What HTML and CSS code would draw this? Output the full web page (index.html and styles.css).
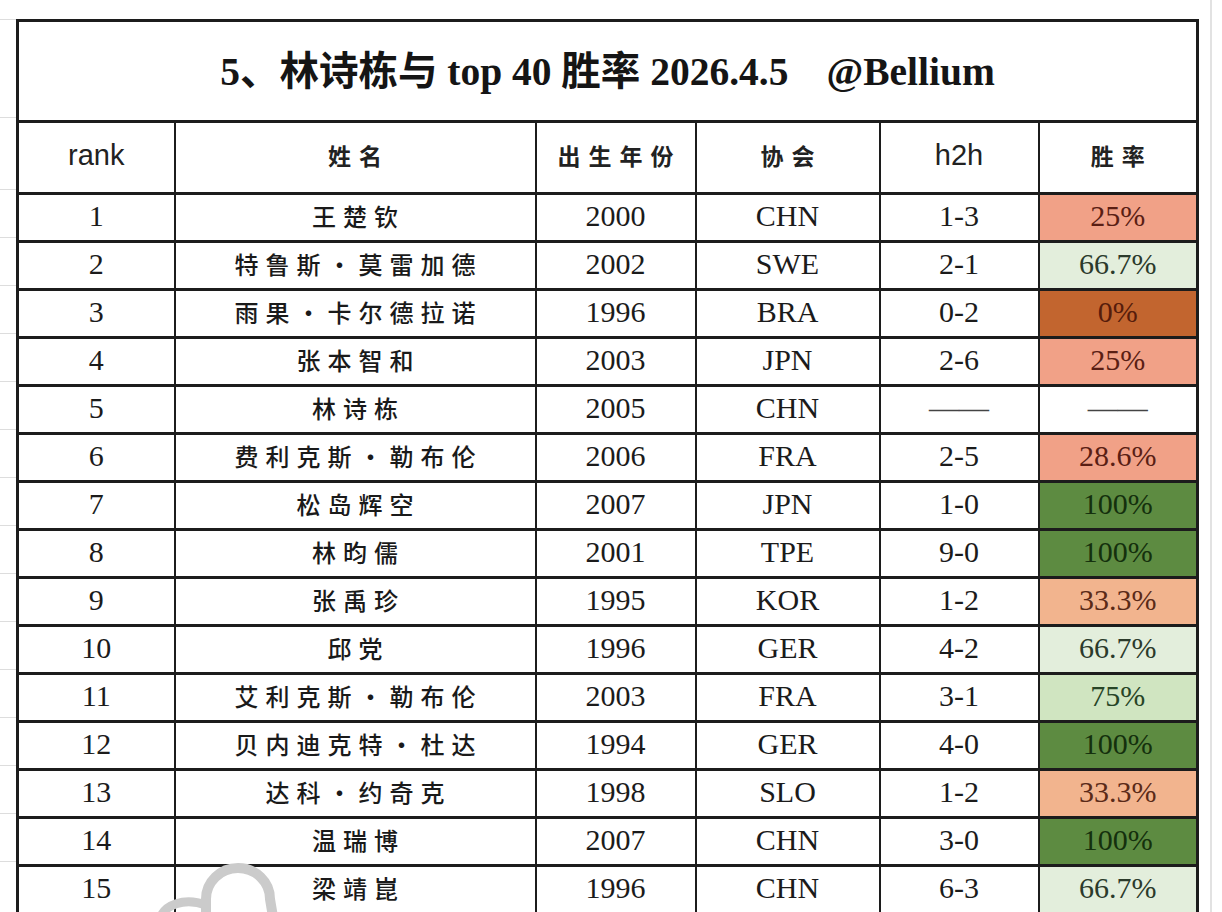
FILE: index.html
```html
<!DOCTYPE html>
<html lang="zh-CN">
<head>
<meta charset="utf-8">
<title>林诗栋与 top 40 胜率</title>
<link rel="stylesheet" href="styles.css">
</head>
<body>
<div class="page">
  <div class="gutter">
    <div class="g-title"></div>
    <div class="g-head"></div>
    <div class="g-row"></div><div class="g-row"></div><div class="g-row"></div>
    <div class="g-row"></div><div class="g-row"></div><div class="g-row"></div>
    <div class="g-row"></div><div class="g-row"></div><div class="g-row"></div>
    <div class="g-row"></div><div class="g-row"></div><div class="g-row"></div>
    <div class="g-row"></div><div class="g-row"></div><div class="g-row"></div>
  </div>
  <table class="sheet">
    <colgroup>
      <col class="c-rank"><col class="c-name"><col class="c-year"><col class="c-assoc"><col class="c-h2h"><col class="c-rate">
    </colgroup>
    <tr class="title-row"><td colspan="6">5、林诗栋与 top 40 胜率 2026.4.5<span class="handle">@Bellium</span></td></tr>
    <tr class="head-row">
      <th class="en">rank</th><th class="zh">姓名</th><th class="zh">出生年份</th><th class="zh">协会</th><th class="en">h2h</th><th class="zh">胜率</th>
    </tr>
    <tr><td>1</td><td class="name">王楚钦</td><td>2000</td><td>CHN</td><td>1-3</td><td class="rate r25">25%</td></tr>
    <tr><td>2</td><td class="name">特鲁斯·莫雷加德</td><td>2002</td><td>SWE</td><td>2-1</td><td class="rate r67">66.7%</td></tr>
    <tr><td>3</td><td class="name">雨果·卡尔德拉诺</td><td>1996</td><td>BRA</td><td>0-2</td><td class="rate r0">0%</td></tr>
    <tr><td>4</td><td class="name">张本智和</td><td>2003</td><td>JPN</td><td>2-6</td><td class="rate r25">25%</td></tr>
    <tr><td>5</td><td class="name">林诗栋</td><td>2005</td><td>CHN</td><td class="dash">——</td><td class="rate dash">——</td></tr>
    <tr><td>6</td><td class="name">费利克斯·勒布伦</td><td>2006</td><td>FRA</td><td>2-5</td><td class="rate r25">28.6%</td></tr>
    <tr><td>7</td><td class="name">松岛辉空</td><td>2007</td><td>JPN</td><td>1-0</td><td class="rate r100">100%</td></tr>
    <tr><td>8</td><td class="name">林昀儒</td><td>2001</td><td>TPE</td><td>9-0</td><td class="rate r100">100%</td></tr>
    <tr><td>9</td><td class="name">张禹珍</td><td>1995</td><td>KOR</td><td>1-2</td><td class="rate r33">33.3%</td></tr>
    <tr><td>10</td><td class="name">邱党</td><td>1996</td><td>GER</td><td>4-2</td><td class="rate r67">66.7%</td></tr>
    <tr><td>11</td><td class="name">艾利克斯·勒布伦</td><td>2003</td><td>FRA</td><td>3-1</td><td class="rate r75">75%</td></tr>
    <tr><td>12</td><td class="name">贝内迪克特·杜达</td><td>1994</td><td>GER</td><td>4-0</td><td class="rate r100">100%</td></tr>
    <tr><td>13</td><td class="name">达科·约奇克</td><td>1998</td><td>SLO</td><td>1-2</td><td class="rate r33">33.3%</td></tr>
    <tr><td>14</td><td class="name">温瑞博</td><td>2007</td><td>CHN</td><td>3-0</td><td class="rate r100">100%</td></tr>
    <tr><td>15</td><td class="name">梁靖崑</td><td>1996</td><td>CHN</td><td>6-3</td><td class="rate r67">66.7%</td></tr>
  </table>
  <div class="rgutter"></div>
  <svg class="watermark" width="140" height="60" viewBox="0 0 140 60" aria-hidden="true">
    <path d="M10 64 C 14 50, 34 42, 56 50" fill="none" stroke="#cbcbcb" stroke-width="9" stroke-linecap="round"/>
    <path d="M56 62 L56 44 A 32 31 0 0 1 120 44 L 123 62" fill="none" stroke="#cbcbcb" stroke-width="10"/>
  </svg>
</div>
</body>
</html>
```

FILE: styles.css
```css
html, body {
  margin: 0;
  background: #ffffff;
  overflow: hidden;
}

.page {
  position: relative;
  display: flex;
  align-items: flex-start;
  height: 893px;
  padding-top: 19px;
  color: #1b1b1b;
  font-family: "Liberation Serif", "Noto Sans CJK SC", serif;
}

.gutter {
  flex: none;
  width: 16px;
}

.gutter div {
  box-sizing: border-box;
  border-top: 1px solid #dddddd;
}

.g-title { height: 98px; }
.g-head { height: 72px; }
.g-row { height: 48px; }

.rgutter {
  flex: 1;
  align-self: stretch;
  margin-top: -19px;
  background: linear-gradient(to right, transparent 11px, #e2e2e2 11px, #e2e2e2 13px, transparent 13px);
}

.sheet {
  flex: none;
  width: 1180px;
  table-layout: fixed;
  border-collapse: collapse;
  border: 3px solid #1c1c1c;
}

.c-rank { width: 157px; }
.c-name { width: 361px; }
.c-year { width: 160px; }
.c-assoc { width: 184px; }
.c-h2h { width: 159px; }
.c-rate { width: 159px; }

.sheet td,
.sheet th {
  padding: 0 0 4px 0;
  border-left: 2px solid #1c1c1c;
  border-right: 2px solid #1c1c1c;
  border-top: 3px solid #1c1c1c;
  border-bottom: 3px solid #1c1c1c;
  text-align: center;
  vertical-align: middle;
  font-weight: normal;
  font-size: 30px;
  line-height: 1;
  height: 41px;
}

.title-row td {
  height: 95px;
  padding: 3px 0 0 0;
  font-size: 39.5px;
  font-weight: 700;
  color: #151515;
  font-family: "Liberation Serif", "Noto Sans CJK SC", serif;
}

.handle {
  margin-left: 38px;
}

.head-row th {
  height: 65px;
}

.head-row th.en {
  font-family: "Liberation Sans", Arial, sans-serif;
  font-size: 29px;
  color: #222222;
}

.head-row th.zh {
  font-family: "Noto Sans CJK SC", sans-serif;
  font-size: 23px;
  font-weight: 700;
  letter-spacing: 8px;
  padding-left: 8px;
  color: #222222;
}

.sheet td.name {
  font-family: "Noto Sans CJK SC", sans-serif;
  font-size: 24px;
  font-weight: 500;
  letter-spacing: 7px;
  padding-left: 7px;
  font-variant-east-asian: full-width;
  color: #1a1a1a;
}

.dash {
  color: #444444;
}

.r25 { background: #f1a187; color: #5a1e14; }
.r67 { background: #e3eedc; color: #2b3a2b; }
.r0 { background: #c2652f; color: #561c0b; }
.r100 { background: #5d8b41; color: #14300d; }
.r33 { background: #f2b48e; color: #5a2a18; }
.r75 { background: #d0e5c1; color: #274426; }

.watermark {
  position: absolute;
  left: 150px;
  top: 855px;
}
```
